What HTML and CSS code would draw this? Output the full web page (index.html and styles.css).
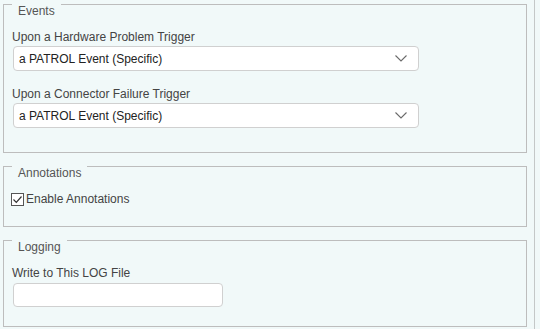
FILE: index.html
```html
<!DOCTYPE html>
<html>
<head>
<meta charset="utf-8">
<link rel="stylesheet" href="styles.css">
</head>
<body>
<div class="page">
  <section class="group group-events">
    <span class="group-title">Events</span>
    <div class="field">
      <label class="field-label">Upon a Hardware Problem Trigger</label>
      <div class="select">
        <span class="select-text">a PATROL Event (Specific)</span>
        <svg class="chevron" width="12" height="7" viewBox="0 0 12 7"><path d="M0.5 0.5 L6 6 L11.5 0.5" fill="none" stroke="#6a6a6a" stroke-width="1.1"/></svg>
      </div>
    </div>
    <div class="field field-second">
      <label class="field-label">Upon a Connector Failure Trigger</label>
      <div class="select">
        <span class="select-text">a PATROL Event (Specific)</span>
        <svg class="chevron" width="12" height="7" viewBox="0 0 12 7"><path d="M0.5 0.5 L6 6 L11.5 0.5" fill="none" stroke="#6a6a6a" stroke-width="1.1"/></svg>
      </div>
    </div>
  </section>

  <section class="group group-annotations">
    <span class="group-title">Annotations</span>
    <div class="check-row">
      <span class="checkbox">
        <svg width="11" height="11" viewBox="0 0 11 11"><path d="M1.5 5.5 L4.3 8.3 L9.5 2.5" fill="none" stroke="#333" stroke-width="1.2"/></svg>
      </span>
      <span class="check-label">Enable Annotations</span>
    </div>
  </section>

  <section class="group group-logging">
    <span class="group-title">Logging</span>
    <div class="field">
      <label class="field-label">Write to This LOG File</label>
      <div class="text-input"></div>
    </div>
  </section>
</div>
</body>
</html>
```

FILE: styles.css
```css
html, body {
  margin: 0;
  padding: 0;
  background: #f1f9f9;
}
body {
  font-family: "Liberation Sans", Arial, sans-serif;
  font-size: 12px;
  color: #444;
  width: 540px;
  height: 329px;
  overflow: hidden;
}
.page {
  width: 535px;
  height: 329px;
  border-right: 1px solid #c4c8c8;
  box-sizing: border-box;
  padding-top: 4px;
  display: flex;
  flex-direction: column;
  gap: 13px;
}
.group {
  margin-left: 3px;
  width: 524px;
  box-sizing: border-box;
  border: 1px solid #bdbdbd;
  padding: 0 8px;
  display: flex;
  flex-direction: column;
  align-items: flex-start;
}
.group-title {
  display: inline-block;
  margin: -1px 0 0 0;
  padding: 0 6px;
  background: #f1f9f9;
  line-height: 14px;
  color: #555;
}
.group-events { padding-bottom: 24px; }
.group-annotations { padding-bottom: 20px; }
.group-logging { padding-bottom: 19px; }

.field {
  display: flex;
  flex-direction: column;
  margin-top: 12px;
}
.field-second { margin-top: 16px; }
.field-label {
  line-height: 14px;
  color: #444;
}
.select {
  margin: 2px 0 0 1px;
  width: 406px;
  height: 25px;
  box-sizing: border-box;
  border: 1px solid #d0d0d0;
  border-radius: 4px;
  background: #fff;
  display: flex;
  align-items: center;
  justify-content: space-between;
  padding: 0 11px 0 5px;
}
.select-text {
  color: #222;
}
.chevron { display: block; }

.check-row {
  display: flex;
  align-items: center;
  margin: 12px 0 0 -1px;
}
.checkbox {
  width: 13px;
  height: 13px;
  box-sizing: border-box;
  border: 1px solid #555;
  background: #fff;
  display: flex;
  align-items: center;
  justify-content: center;
}
.checkbox svg { display: block; }
.check-label {
  margin-left: 2px;
  line-height: 14px;
  color: #444;
}
.text-input {
  margin: 3px 0 0 1px;
  width: 210px;
  height: 24px;
  box-sizing: border-box;
  border: 1px solid #d0d0d0;
  border-radius: 4px;
  background: #fff;
}
```
